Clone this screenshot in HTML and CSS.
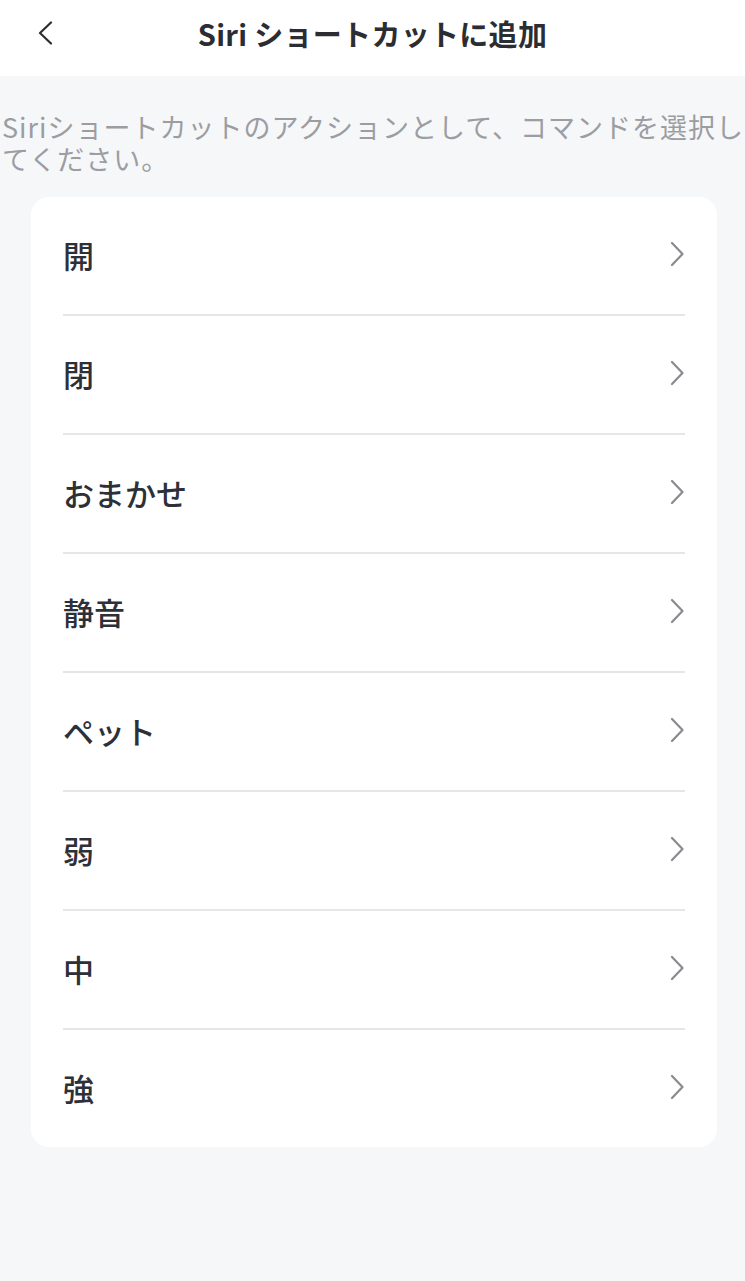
FILE: index.html
```html
<!DOCTYPE html>
<html lang="ja">
<head>
<meta charset="utf-8">
<title>Siriショートカットに追加</title>
<link rel="stylesheet" href="styles.css">
</head>
<body>
<header class="topbar">
  <div class="topbar-left">
    <button class="back" aria-label="戻る">
      <svg width="18" height="24" viewBox="0 0 18 24"><path d="M15 1.5 L4 12 L15 22.5" fill="none" stroke="#2b2d33" stroke-width="2.2" stroke-linecap="round" stroke-linejoin="round"/></svg>
    </button>
  </div>
  <h1 class="title">Siri ショートカットに追加</h1>
  <div class="topbar-right"></div>
</header>
<main class="content">
  <p class="desc">Siriショートカットのアクションとして、コマンドを選択してください。</p>
  <ul class="list">
    <li class="row"><span class="label">開</span><svg class="chev" width="14" height="26" viewBox="0 0 14 26"><path d="M2 2 L12.5 13 L2 24" fill="none" stroke="#8a8a8f" stroke-width="2.2" stroke-linecap="round" stroke-linejoin="round"/></svg></li>
    <li class="row"><span class="label">閉</span><svg class="chev" width="14" height="26" viewBox="0 0 14 26"><path d="M2 2 L12.5 13 L2 24" fill="none" stroke="#8a8a8f" stroke-width="2.2" stroke-linecap="round" stroke-linejoin="round"/></svg></li>
    <li class="row"><span class="label">おまかせ</span><svg class="chev" width="14" height="26" viewBox="0 0 14 26"><path d="M2 2 L12.5 13 L2 24" fill="none" stroke="#8a8a8f" stroke-width="2.2" stroke-linecap="round" stroke-linejoin="round"/></svg></li>
    <li class="row"><span class="label">静音</span><svg class="chev" width="14" height="26" viewBox="0 0 14 26"><path d="M2 2 L12.5 13 L2 24" fill="none" stroke="#8a8a8f" stroke-width="2.2" stroke-linecap="round" stroke-linejoin="round"/></svg></li>
    <li class="row"><span class="label">ペット</span><svg class="chev" width="14" height="26" viewBox="0 0 14 26"><path d="M2 2 L12.5 13 L2 24" fill="none" stroke="#8a8a8f" stroke-width="2.2" stroke-linecap="round" stroke-linejoin="round"/></svg></li>
    <li class="row"><span class="label">弱</span><svg class="chev" width="14" height="26" viewBox="0 0 14 26"><path d="M2 2 L12.5 13 L2 24" fill="none" stroke="#8a8a8f" stroke-width="2.2" stroke-linecap="round" stroke-linejoin="round"/></svg></li>
    <li class="row"><span class="label">中</span><svg class="chev" width="14" height="26" viewBox="0 0 14 26"><path d="M2 2 L12.5 13 L2 24" fill="none" stroke="#8a8a8f" stroke-width="2.2" stroke-linecap="round" stroke-linejoin="round"/></svg></li>
    <li class="row"><span class="label">強</span><svg class="chev" width="14" height="26" viewBox="0 0 14 26"><path d="M2 2 L12.5 13 L2 24" fill="none" stroke="#8a8a8f" stroke-width="2.2" stroke-linecap="round" stroke-linejoin="round"/></svg></li>
  </ul>
</main>
</body>
</html>
```
FILE: styles.css
```css
* { box-sizing: border-box; }
html, body {
  margin: 0;
  padding: 0;
}
body {
  background: #f6f7f9;
  font-family: "Noto Sans CJK JP", "Noto Sans", sans-serif;
  min-height: 1281px;
}
.topbar {
  height: 76px;
  padding-bottom: 10px;
  background: #ffffff;
  display: grid;
  grid-template-columns: 1fr auto 1fr;
  align-items: center;
}
.topbar-left {
  padding-left: 36px;
  display: flex;
  align-items: center;
}
.back {
  border: 0;
  background: none;
  padding: 0;
  display: flex;
  cursor: pointer;
}
.title {
  margin: 0;
  font-size: 29px;
  font-weight: 700;
  color: #2b2d33;
  letter-spacing: 0.3px;
  line-height: 40px;
}
.content {
  padding: 0;
}
.desc {
  margin: 0;
  padding: 35px 0 0 2px;
  font-size: 27px;
  line-height: 32px;
  letter-spacing: 1px;
  color: #9c9da1;
}
.list {
  list-style: none;
  margin: 22px 28px 0 31px;
  padding: 0 32px;
  background: #ffffff;
  border-radius: 18px;
}
.row {
  height: 119px;
  padding-bottom: 3px;
  display: flex;
  align-items: center;
  justify-content: space-between;
  border-bottom: 2px solid #e6e6e8;
}
.row:last-child {
  border-bottom: 0;
  height: 117px;
}
.label {
  font-size: 31px;
  font-weight: 500;
  color: #2e3038;
}
.chev {
  display: block;
  margin-right: 1px;
}
```
